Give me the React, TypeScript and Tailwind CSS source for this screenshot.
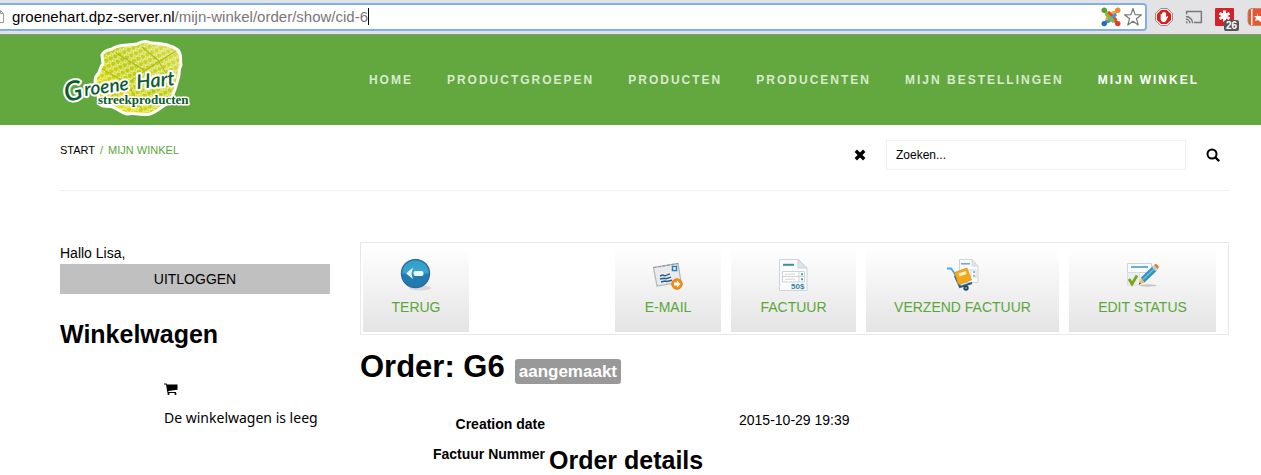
import React from "react";

function JoomlaIcon() {
  return (
    <svg viewBox="0 0 20 20" className="size-5" fill="none" strokeWidth="3.2" aria-hidden="true">
      <path d="M5 13l6-6a3.4 3.4 0 0 1 5-1" stroke="#f9a541" />
      <path d="M7 5l6 6a3.4 3.4 0 0 1 1 5" stroke="#f44321" />
      <path d="M15 7l-6 6a3.4 3.4 0 0 1-5 1" stroke="#5091cd" />
      <path d="M13 15L7 9a3.4 3.4 0 0 1-1-5" stroke="#7ac143" />
      <g stroke="none">
        <circle cx="3.2" cy="3.2" r="2.7" fill="#5ba12c" />
        <circle cx="16.8" cy="3.2" r="2.7" fill="#f58a1f" />
        <circle cx="3.2" cy="16.6" r="2.7" fill="#1d6cb5" />
        <circle cx="16.8" cy="16.6" r="2.7" fill="#e23a24" />
      </g>
    </svg>
  );
}

function StarIcon() {
  return (
    <svg viewBox="0 0 20 20" className="size-5" fill="#fff" stroke="#777" strokeWidth="1.2" strokeLinejoin="round" aria-hidden="true">
      <path d="M10 1.500l2.100 6.100 6.400.2-5.100 3.900 1.800 6.200L10 14.200l-5.200 3.700 1.800-6.200L1.500 7.800l6.400-.2z" />
    </svg>
  );
}

function BlockIcon() {
  return (
    <svg viewBox="0 0 20 20" className="size-5" aria-hidden="true">
      <path d="M6.2.7h7.600l5.500 5.500v7.600l-5.500 5.500H6.200L.7 13.800V6.200z" fill="#fff" stroke="#777" />
      <path d="M6.800 2.200h6.400l4.600 4.600v6.400l-4.600 4.600H6.800l-4.600-4.600V6.800z" fill="#dc1d1d" />
      <path d="M6.300 10.500V7q.8-.8 1.500 0V5.300q.8-.8 1.500 0v-.8q.8-.8 1.500 0v.8q.8-.8 1.500 0v5l1.200-1.200q1-.3 1.100.6l-2.500 4.800q-.6 1-1.600 1H8.700q-2.200-.7-2.400-2.700z" fill="#fff" />
    </svg>
  );
}

function CastIcon() {
  return (
    <svg viewBox="0 0 20 16" className="h-4 w-5" fill="none" stroke="#777" strokeWidth="1.6" aria-hidden="true">
      <path d="M1.800 5V1.800h16.400v12.400H10" />
      <path d="M1 7.500a7.500 7.500 0 0 1 7.500 7.500M1 10.600A4.400 4.400 0 0 1 5.400 15" />
      <path d="M1 12.800A2.200 2.200 0 0 1 3.200 15H1z" fill="#777" stroke="none" />
    </svg>
  );
}

function AsteriskIcon() {
  return (
    <svg viewBox="0 0 20 20" className="size-5" aria-hidden="true">
      <rect x="0" y="1" width="19" height="18" rx="1" fill="#d3222a" />
      <path d="M9.500 3.500v11M4.500 6.200l10 5.600M14.500 6.200l-10 5.600" stroke="#fff" strokeWidth="3" />
    </svg>
  );
}

function BrowserBar() {
  return (
    <div className="flex h-[35px] items-center overflow-hidden border-b border-[#8c8c92] bg-[#e3e2e4] pb-px">
      <div className="flex h-7 min-w-0 flex-1 items-center rounded-r-sm border-2 border-l-0 border-[#7fb0e8] bg-white pr-0.5">
        <svg viewBox="0 0 6 16" className="h-4 w-1.5 shrink-0" fill="none" stroke="#999" aria-hidden="true">
          <path d="M0 1.500h.500l3 3v9H0M.5 1.500v3h3" />
        </svg>
        <p className="flex flex-1 items-center pl-1.5 text-[15px] leading-5 whitespace-nowrap text-black">
          groenehart.dpz-server.nl<span className="text-[#777]">/mijn-winkel/order/show/cid-6</span>
          <span className="h-[17px] w-px bg-black" />
        </p>
        <div className="flex items-center gap-0.5">
          <JoomlaIcon />
          <StarIcon />
        </div>
      </div>
      <div className="flex w-[114px] shrink-0 items-center gap-3 pl-2">
        <BlockIcon />
        <CastIcon />
        <div className="relative size-5 shrink-0">
          <AsteriskIcon />
          <span className="absolute -right-1 -bottom-1 rounded-xs bg-[#555] px-0.5 text-[10px] leading-[11px] font-bold text-white">26</span>
        </div>
        <svg viewBox="0 0 14 20" className="h-5 w-3.5 shrink-0" aria-hidden="true">
          <rect x="1" y="1.500" width="18" height="17" rx="4" fill="#e8552f" stroke="#b98a70" />
          <rect x="4" y="2" width="1.500" height="16" fill="#fff" />
          <path d="M10 6l1 3h4v7l-4-3-3 1 1-3-2-2h3z" fill="#fff" />
        </svg>
      </div>
    </div>
  );
}

const leafPath =
  "M42 16C44 11 48 11 52 10C58 5 68 7 77 5C82 2 87 2 91 4C101 4 111 6 118 11C122 16 120 21 121 26C118 31 120 36 118 40C116 47 114 58 107 65C102 67 97 73 90 75C82 77 75 73 67 75C62 74 58 70 53 68C48 66 41 69 40 65C37 61 39 57 38 53C36 47 33 41 37 36C41 33 39 28 43 25Z";

function Logo() {
  return (
    <svg viewBox="0 0 132 80" className="h-20 w-[132px]" role="img" aria-label="Groene Hart streekproducten">
      <defs>
        <linearGradient id="leaf" x1="1" y1="0" x2="0" y2="1">
          <stop offset="0" stopColor="#d9df55" />
          <stop offset="0.5" stopColor="#bccb14" />
          <stop offset="1" stopColor="#f0e600" />
        </linearGradient>
        <pattern id="cells" width="5" height="6" patternUnits="userSpaceOnUse" patternTransform="rotate(-25)">
          <path d="M0 1.500L2.500 0 5 1.500M0 1.500v3L2.500 6 5 4.500" fill="none" stroke="#f8f8bd" strokeWidth="0.9" />
        </pattern>
      </defs>
      <path d={leafPath} fill="url(#leaf)" stroke="#fff" strokeWidth="3" strokeLinejoin="round" />
      <path d={leafPath} fill="url(#cells)" />
      <path d="M116 12C92 26 64 46 44 64M99 22L82 8M84 31L56 14M67 44L42 30M99 23l14 22M84 33l14 30M68 45l14 26" fill="none" stroke="#a9bd16" strokeWidth="1.1" />
      <g fill="#0c5a2e" stroke="#fff" strokeLinejoin="round" style={{ paintOrder: "stroke" }}>
        <g strokeWidth="4" className="font-['Lato'] font-semibold italic">
          <text x="6" y="63" fontSize="27" transform="rotate(-12 6 63)">G</text>
          <text x="25" y="57" fontSize="19" transform="rotate(-8 25 57)">roene</text>
          <text x="77" y="50" fontSize="20" transform="rotate(-6 77 50)">Hart</text>
        </g>
        <text x="38" y="65" fontSize="13" strokeWidth="3" className="font-['Liberation_Serif'] font-bold">streekproducten</text>
      </g>
    </svg>
  );
}

const navItems = ["Home", "Productgroepen", "Producten", "Producenten", "Mijn bestellingen", "Mijn winkel"];

function CloseIcon() {
  return (
    <svg viewBox="0 0 12 12" className="size-3" aria-hidden="true">
      <path d="M3 3l6 6M9 3l-6 6" stroke="#000" strokeWidth="3.4" strokeLinecap="square" />
    </svg>
  );
}

function SearchIcon() {
  return (
    <svg viewBox="0 0 14 14" className="size-3.5" fill="none" stroke="#000" aria-hidden="true">
      <circle cx="6" cy="6" r="4.5" strokeWidth="2" />
      <path d="M9.500 9.500l3 3" strokeWidth="2.400" strokeLinecap="round" />
    </svg>
  );
}

function CartIcon() {
  return (
    <svg viewBox="0 0 14 14" className="size-3.5" aria-hidden="true">
      <path d="M0 1.500h2.600l.4 1h10.500v5.300L4.300 9l.2 1H12v1H3.500l-.3-1.500L2 2.500H0z" />
      <circle cx="4.500" cy="12" r="1.100" />
      <circle cx="11.500" cy="12" r="1.100" />
    </svg>
  );
}

function BackIcon() {
  return (
    <svg viewBox="0 0 32 32" className="size-8" aria-hidden="true">
      <defs>
        <linearGradient id="back" x1="0" y1="0" x2="0" y2="1">
          <stop offset="0" stopColor="#2f9fca" />
          <stop offset="0.45" stopColor="#3aa5d0" />
          <stop offset="0.55" stopColor="#1f7db4" />
          <stop offset="1" stopColor="#2578ad" />
        </linearGradient>
      </defs>
      <ellipse cx="20" cy="29" rx="11" ry="2.500" fill="#000" opacity="0.1" />
      <circle cx="15.500" cy="14.500" r="14" fill="url(#back)" stroke="#2c6a9c" strokeWidth="1.4" />
      <path d="M6 14.500l7-6-1.200 4.500q-.5 1.500 0 3l1.200 4z" fill="#eef7fb" />
      <rect x="13.500" y="12" width="10" height="5" rx="2" fill="#eef7fb" />
    </svg>
  );
}

function MailIcon() {
  return (
    <svg viewBox="0 0 32 32" className="size-8" aria-hidden="true">
      <path d="M1.500 8.500L26 4.500l3 18.500L5 27z" fill="#e9eaec" stroke="#b1b5b8" strokeWidth="1.2" />
      <path d="M1.500 8.500L26 4.500" stroke="#90969a" strokeWidth="1.2" strokeDasharray="3 1.500" />
      <rect x="20.500" y="7.500" width="4" height="4" fill="#fff" stroke="#2b7fbd" strokeWidth="1.5" />
      <path d="M8 17l3-1 2 .8 5-2M8 20l4-.8 2 .5 5-1.500M9 23l4-1 2 .5 5-1.200" fill="none" stroke="#245f8b" strokeWidth="1.4" />
      <circle cx="25" cy="25" r="5.300" fill="#f78b13" stroke="#e8750a" strokeWidth="0.8" />
      <path d="M22 23.500h3v-2l3.500 3.500-3.500 3.500v-2h-3z" fill="#fff" />
    </svg>
  );
}

function InvoiceIcon() {
  return (
    <svg viewBox="0 0 32 32" className="size-8" aria-hidden="true">
      <path d="M1.500.5h18.500l9 8.500v22.500H1.500z" fill="#f8fafb" stroke="#ced4d7" />
      <path d="M20 .5V9h9z" fill="#dfe4e7" stroke="#c5ccd0" strokeWidth="0.8" />
      <path d="M5 5.800h11" stroke="#418ba4" strokeWidth="2" />
      <path d="M4.500 12.500h22v10.500h-22zM4.500 17.500h22M21 12.500V23" fill="#fff" stroke="#cfd3d5" />
      <path d="M7 15.200h10M7 20.200h10" stroke="#cfd3d5" />
      <path d="M23 15.200h2M23 20.200h2" stroke="#3f9fc0" strokeWidth="2" />
      <text x="13" y="30" fontSize="8" fill="#37829c" className="font-bold">50$</text>
    </svg>
  );
}

function ShipIcon() {
  return (
    <svg viewBox="0 0 32 32" className="size-8" aria-hidden="true">
      <path d="M12.500.5h12.500l6 6.500v16.500h-18.500z" fill="#f8fafb" stroke="#ced4d7" />
      <path d="M25 .5V7h6z" fill="#dfe4e7" stroke="#cdd3d6" strokeWidth="0.6" />
      <path d="M14 4.800h9" stroke="#6ba8c0" strokeWidth="1.5" />
      <path d="M18 11h11v8M24 11v9" fill="none" stroke="#d4d8da" />
      <path d="M26 13h2M26 17h2" stroke="#63a9c7" strokeWidth="1.5" />
      <path d="M0 9.500h4l3 4 6 14" fill="none" stroke="#4aa9d8" strokeWidth="1.8" />
      <path d="M8 17l5 11 12-4" fill="none" stroke="#245f84" strokeWidth="2" />
      <path d="M8.500 13L20 9l4.500 12L13 25.500q-1.500.3-2-1L8 15q-.2-1.500.5-2z" fill="#f2a81d" stroke="#d98c12" strokeWidth="0.6" />
      <path d="M12 16l7-2.500" stroke="#fff0b8" strokeWidth="3" />
      <circle cx="19" cy="29" r="1.700" fill="#fff" stroke="#294860" strokeWidth="2" />
    </svg>
  );
}

function EditIcon() {
  return (
    <svg viewBox="0 0 32 32" className="size-8" aria-hidden="true">
      <ellipse cx="21" cy="26.500" rx="9" ry="1.200" fill="#000" opacity="0.18" />
      <path d="M.5 4.500h24v9H.5z" fill="#fafbfc" stroke="#ced4d7" />
      <path d="M4 8h17" stroke="#6aafcf" strokeWidth="2" />
      <path d="M.5 13.500h12V26H.5z" fill="#eceeef" stroke="#d6d9db" strokeWidth="0.8" />
      <path d="M2 20l3 5L10 16.500" fill="none" stroke="#76a91b" strokeWidth="2.8" />
      <path d="M12 25.500l2-7 4 5z" fill="#f3bf60" />
      <path d="M14 18.500L26 7l4 4.500-12.500 12z" fill="#2e93be" />
      <path d="M16 20.500L28 9" stroke="#6cc0dd" strokeWidth="1.5" />
      <path d="M25 8l2-2 4 4-2 2.500z" fill="#c8d0d4" />
      <path d="M27 6l1-.8q1-.5 2 .3l1.500 1.800q.7 1-.2 1.900l-.7.7z" fill="#e57a25" />
      <path d="M12 25.500l.5-2 1.500 1.300z" fill="#333" />
    </svg>
  );
}

function ToolButton({ label, icon, className = "" }: { label: string; icon: React.ReactNode; className?: string }) {
  return (
    <button type="button" className={`flex h-[85px] flex-col items-center bg-linear-to-b from-white to-[#e4e4e4] pt-3 text-sm leading-5 text-[#5ba639] uppercase ${className}`}>
      {icon}
      <span className="mt-1.5">{label}</span>
    </button>
  );
}

export default function App() {
  return (
    <div className="bg-white font-['Liberation_Sans',Arial,sans-serif] text-sm leading-5 text-black">
      <BrowserBar />
      <header className="flex h-[90px] items-start justify-between bg-[#63a83e] pr-[62px] pl-[60px]">
        <a href="#home" className="mt-1">
          <Logo />
        </a>
        <nav className="mt-[35px] flex gap-[34px] text-xs leading-5 font-bold tracking-[2px] whitespace-nowrap text-[#d8ead0] uppercase">
          {navItems.map((item) => (
            <a key={item} href="#nav" className={item === "Mijn winkel" ? "text-white" : ""}>
              {item}
            </a>
          ))}
        </nav>
      </header>

      <div className="pr-[31px] pl-[60px]">
        <div className="flex h-[66px] items-start justify-between border-b border-[#f0f0f0] pt-[15px]">
          <nav className="flex gap-[5px] text-[11px] leading-5 uppercase" aria-label="Breadcrumb">
            <a href="#start">Start</a>
            <span className="text-[#5ba639]">/</span>
            <a href="#winkel" className="text-[#5ba639]">Mijn winkel</a>
          </nav>
          <form className="flex items-center pr-2.5">
            <button type="button" aria-label="Wissen" className="mr-5">
              <CloseIcon />
            </button>
            <input aria-label="Zoeken" placeholder="Zoeken..." className="mr-5 h-[30px] w-[300px] border border-[#efefef] px-[9px] text-xs placeholder:text-black" />
            <button type="submit" aria-label="Zoek">
              <SearchIcon />
            </button>
          </form>
        </div>

        <div className="flex gap-[30px] pt-[51px]">
          <aside className="w-[270px] shrink-0">
            <p className="pt-px pb-px">Hallo Lisa,</p>
            <button type="button" className="h-[30px] w-full bg-[#c0c0c0] uppercase">Uitloggen</button>
            <h2 className="mt-5 text-[25px] leading-10 font-bold">Winkelwagen</h2>
            <div className="mt-7 pl-[104px]">
              <CartIcon />
              <p className="mt-3 font-['Noto_Sans',sans-serif] whitespace-nowrap">De winkelwagen is leeg</p>
            </div>
          </aside>

          <main className="min-w-0 flex-1 pr-px">
            <div className="flex gap-2.5 border border-[#e8e8e8] p-0.5 pt-1 pr-3">
              <ToolButton label="Terug" icon={<BackIcon />} className="mr-auto w-[106px]" />
              <ToolButton label="E-mail" icon={<MailIcon />} className="w-[106px]" />
              <ToolButton label="Factuur" icon={<InvoiceIcon />} className="w-[125px]" />
              <ToolButton label="Verzend factuur" icon={<ShipIcon />} className="w-[193px]" />
              <ToolButton label="Edit status" icon={<EditIcon />} className="w-[147px]" />
            </div>
            <h1 className="mt-3 flex items-center gap-2.5 text-[31px] leading-10 font-bold">
              Order: G6
              <span className="mt-2 rounded-[3px] bg-[#999] px-1 text-[17px] leading-[25px] text-white">aangemaakt</span>
            </h1>
            <dl className="mt-[23px] flex">
              <dt className="w-[185px] pt-1 text-right font-bold">Creation date</dt>
              <dd className="pl-[194px]">2015-10-29 19:39</dd>
            </dl>
            <div className="flex gap-1 pt-2.5">
              <span className="w-[185px] text-right font-bold">Factuur Nummer</span>
              <h2 className="pt-0.5 text-[25px] leading-7 font-bold">Order details</h2>
            </div>
          </main>
        </div>
      </div>
    </div>
  );
}
